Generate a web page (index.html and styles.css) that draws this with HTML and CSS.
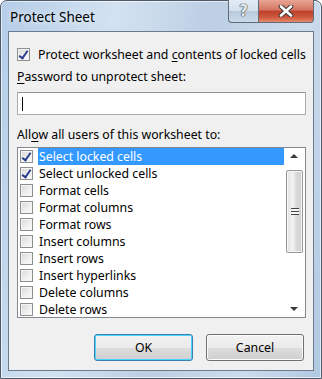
FILE: index.html
```html
<!DOCTYPE html>
<html lang="en">
<head>
    <meta charset="UTF-8">
    <title>Protect Sheet</title>
    <link rel="stylesheet" href="styles.css">
</head>
<body>
    <div class="window">
        <div class="titlebar">
            <span class="title">Protect Sheet</span>
            <div class="caption-buttons">
                <div class="cap-btn help">?</div>
                <div class="cap-btn close">
                    <svg width="18" height="12" viewBox="0 0 18 12">
                        <path d="M4 1.5 L14 10.5 M14 1.5 L4 10.5" stroke="#3b3b3b" stroke-width="4.6" stroke-linecap="round"/>
                        <path d="M4 1.5 L14 10.5 M14 1.5 L4 10.5" stroke="#fff" stroke-width="2.6" stroke-linecap="round"/>
                    </svg>
                </div>
            </div>
        </div>

        <div class="client">
            <div class="check-row">
                <span class="checkbox checked"></span>
                <span>Protect worksheet and <u>c</u>ontents of locked cells</span>
            </div>

            <div class="label"><u>P</u>assword to unprotect sheet:</div>
            <div class="textbox"><span class="caret"></span></div>

            <div class="label">All<u>o</u>w all users of this worksheet to:</div>
            <div class="listbox">
                <div class="list-items">
                    <div class="item selected"><span class="checkbox checked"></span><span class="text">Select locked cells</span></div>
                    <div class="item"><span class="checkbox checked"></span><span class="text">Select unlocked cells</span></div>
                    <div class="item"><span class="checkbox"></span><span class="text">Format cells</span></div>
                    <div class="item"><span class="checkbox"></span><span class="text">Format columns</span></div>
                    <div class="item"><span class="checkbox"></span><span class="text">Format rows</span></div>
                    <div class="item"><span class="checkbox"></span><span class="text">Insert columns</span></div>
                    <div class="item"><span class="checkbox"></span><span class="text">Insert rows</span></div>
                    <div class="item"><span class="checkbox"></span><span class="text">Insert hyperlinks</span></div>
                    <div class="item"><span class="checkbox"></span><span class="text">Delete columns</span></div>
                    <div class="item"><span class="checkbox"></span><span class="text">Delete rows</span></div>
                </div>
                <div class="scrollbar">
                    <div class="arrow up"></div>
                    <div class="thumb">
                        <span class="grip"></span>
                    </div>
                    <div class="track"></div>
                    <div class="arrow down"></div>
                </div>
            </div>

            <div class="buttons">
                <div class="button default">OK</div>
                <div class="button">Cancel</div>
            </div>
        </div>
    </div>
</body>
</html>
```

FILE: styles.css
```css
body {
    margin: 0;
    padding: 0;
    background-color: #fff;
    font-family: 'Noto Sans', 'DejaVu Sans', sans-serif;
    font-size: 12.3px;
    color: #000;
}
u {
    text-decoration: underline;
    text-underline-offset: 2px;
}
.window {
    width: 322px;
    height: 379px;
    box-sizing: border-box;
    border: 1px solid #4f5b69;
    border-radius: 7px 7px 0 0;
    background: linear-gradient(100deg, #b4cde8 0%, #d3e2f1 30%, #bccfe3 55%, #cddcec 80%, #b0c8e2 100%);
    box-shadow: inset 0 0 0 1px rgba(255, 255, 255, 0.6);
    display: flex;
    flex-direction: column;
}
.titlebar {
    height: 30px;
    display: flex;
    justify-content: space-between;
    align-items: flex-start;
    padding-left: 9px;
}
.title {
    margin-top: 7px;
    font-family: 'Noto Sans', sans-serif;
    font-size: 13.5px;
    color: #000;
    text-shadow: 0 0 6px rgba(255, 255, 255, 0.9);
}
.caption-buttons {
    display: flex;
    margin-right: 7px;
    margin-top: -1px;
}
.cap-btn {
    height: 22px;
    border: 1px solid #606a78;
    border-top: none;
    display: flex;
    align-items: center;
    justify-content: center;
}
.help {
    width: 29px;
    border-radius: 0 0 0 4px;
    border-right: none;
    background: linear-gradient(#e3ecf5 0%, #d3e0ec 48%, #b9cadb 52%, #cbdbe9 100%);
    font-family: 'DejaVu Sans', sans-serif;
    font-weight: bold;
    font-size: 15px;
    color: #e4e9ee;
    text-shadow: 0 0 1px #444, 0 0 1px #444, 0 0 1px #444;
}
.close {
    width: 54px;
    border-radius: 0 0 4px 0;
    background: linear-gradient(#e8a493 0%, #d47561 45%, #c0412a 52%, #cf5a3f 80%, #e58c6c 100%);
}
.client {
    flex: 1;
    margin: 0 7px 7px 7px;
    border: 1px solid #6b7a8c;
    background-color: #f0f0f0;
    padding: 0 7px 0 8px;
    display: flex;
    flex-direction: column;
}
.check-row {
    display: flex;
    align-items: center;
    height: 16px;
    margin-top: 14px;
}
.checkbox {
    width: 11px;
    height: 11px;
    border: 1px solid #8e8f8f;
    background: linear-gradient(135deg, #d8d8d8 0%, #f0f0f0 60%, #fdfdfd 100%);
    box-shadow: inset 0 0 0 1px #f4f4f4;
    flex-shrink: 0;
    position: relative;
}
.check-row .checkbox {
    margin-right: 8px;
}
.checkbox.checked::after {
    content: '';
    position: absolute;
    left: 3px;
    top: 0px;
    width: 3px;
    height: 8px;
    border: solid #2a3d8e;
    border-width: 0 2px 2px 0;
    transform: rotate(35deg);
}
.label {
    margin-top: 7px;
    height: 16px;
    line-height: 16px;
}
.textbox {
    margin-top: 7px;
    height: 21px;
    border: 1px solid #abadb3;
    border-top-color: #8f9196;
    background-color: #fff;
    display: flex;
    align-items: center;
    padding-left: 4px;
}
.caret {
    width: 1px;
    height: 14px;
    background-color: #000;
}
.textbox + .label {
    margin-top: 12px;
}
.listbox {
    margin-top: 4px;
    height: 169px;
    border: 1px solid #828790;
    background-color: #fff;
    display: flex;
}
.list-items {
    flex: 1;
    padding-left: 2px;
}
.item {
    height: 17px;
    display: flex;
    align-items: center;
}
.item .text {
    flex: 1;
    height: 17px;
    line-height: 17px;
    margin-left: 5px;
    padding-left: 1px;
}
.item.selected .text {
    background-color: #3399ff;
    color: #fff;
}
.scrollbar {
    width: 21px;
    display: flex;
    flex-direction: column;
    align-items: center;
}
.arrow {
    height: 17px;
    width: 17px;
    position: relative;
}
.arrow::after {
    content: '';
    position: absolute;
    left: 4px;
    width: 0;
    height: 0;
    border-left: 4px solid transparent;
    border-right: 4px solid transparent;
}
.arrow.up::after {
    top: 6px;
    border-bottom: 4px solid #3b3b3b;
}
.arrow.down::after {
    top: 7px;
    border-top: 4px solid #3b3b3b;
}
.thumb {
    width: 17px;
    height: 83px;
    margin-top: 5px;
    box-sizing: border-box;
    border: 1px solid #979797;
    border-radius: 2px;
    background: linear-gradient(to right, #e2e2e2, #f3f3f3 40%, #dadada 60%, #cfcfcf);
    box-shadow: inset 0 0 0 1px #f6f6f6;
    display: flex;
    align-items: center;
    justify-content: center;
}
.grip {
    width: 8px;
    height: 7px;
    background: repeating-linear-gradient(#444 0 1px, #f6f6f6 1px 3px);
}
.track {
    flex: 1;
}
.buttons {
    display: flex;
    justify-content: flex-end;
    gap: 13px;
    margin-top: 16px;
    padding-right: 2px;
}
.button {
    width: 96px;
    height: 25px;
    border: 1px solid #707070;
    border-radius: 3px;
    background: linear-gradient(#f2f2f2 0%, #ebebeb 50%, #dddddd 51%, #cfcfcf 100%);
    box-shadow: inset 0 0 0 1px #fcfcfc;
    display: flex;
    align-items: center;
    justify-content: center;
}
.button.default {
    width: 97px;
    border-color: #3c7fb1;
    box-shadow: inset 0 0 0 1px #48d5fb;
}
```
